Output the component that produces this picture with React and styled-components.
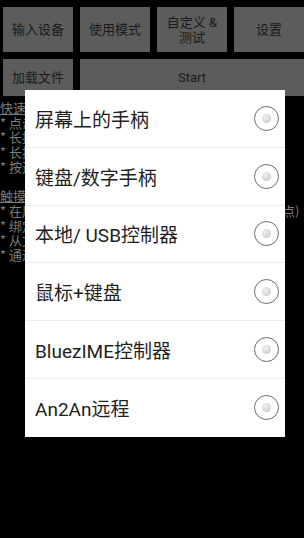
import React from "react"
import styled, { createGlobalStyle } from "styled-components"

const GlobalStyle = createGlobalStyle`
  html, body {
    margin: 0;
    padding: 0;
    background: #000;
  }
  body {
    font-family: Roboto, "Noto Sans CJK SC", sans-serif;
  }
`

const Screen = styled.div`
  position: relative;
  width: 304px;
  height: 538px;
  background: #000;
  overflow: hidden;
`

const Toolbar = styled.div`
  display: grid;
  grid-template-columns: repeat(4, 1fr);
  grid-template-rows: 45px 37px;
  gap: 7px;
  padding: 7px 0 0 3px;
`

const Button = styled.div`
  grid-column: ${p => (p.$span ? `span ${p.$span}` : "auto")};
  display: flex;
  align-items: center;
  justify-content: center;
  text-align: center;
  background: #5c5c5c;
  color: #1a1a1a;
  font-size: 13px;
  line-height: 15px;
`

const Help = styled.div`
  padding: 5px 0 0 0;
  color: #7c7c7c;
  font-family: "Noto Sans CJK SC", sans-serif;
  font-size: 13px;
  line-height: 14.7px;
`

const Line = styled.div`
  white-space: nowrap;
  overflow: hidden;
  height: 14.7px;
  text-decoration: ${p => (p.$head ? "underline" : "none")};
`

const Dialog = styled.div`
  position: absolute;
  left: 25px;
  top: 90px;
  width: 260px;
  background: #fff;
  display: flex;
  flex-direction: column;
`

const Option = styled.div`
  height: 57.8px;
  box-sizing: border-box;
  display: flex;
  align-items: center;
  justify-content: space-between;
  padding: 0 6px 0 10px;
  border-bottom: ${p => (p.$last ? "none" : "1px solid #ececec")};
  color: #1e1e1e;
  font-size: 19px;
`

const Radio = styled.div`
  width: 25px;
  height: 25px;
  box-sizing: border-box;
  border-radius: 50%;
  border: 1.5px solid #6c6c6c;
  display: flex;
  align-items: center;
  justify-content: center;

  &::after {
    content: "";
    width: 9px;
    height: 9px;
    border-radius: 50%;
    background: radial-gradient(circle at 40% 35%, #f2f2f2, #c2c2c2);
  }
`

const helpLines = [
  { text: "快速入门", head: true },
  { text: "* 点击“输入设备”选择控制器" },
  { text: "* 长按按钮可查看帮助" },
  { text: "* 长按屏幕可隐藏界面" },
  { text: "* 按返回键退出" },
  { text: "" },
  { text: "触摸模式", head: true },
  { text: "* 在屏幕上显示虚拟手柄（需要悬浮窗权限和触摸点)" },
  { text: "* 绑定按键到屏幕位置" },
  { text: "* 从文件加载配置" },
  { text: "* 通过蓝牙连接" },
]

const options = [
  "屏幕上的手柄",
  "键盘/数字手柄",
  "本地/ USB控制器",
  "鼠标+键盘",
  "BluezIME控制器",
  "An2An远程",
]

export default function App() {
  return (
    <Screen>
      <GlobalStyle />
      <Toolbar>
        <Button>输入设备</Button>
        <Button>使用模式</Button>
        <Button>
          自定义 &amp;
          <br />
          测试
        </Button>
        <Button>设置</Button>
        <Button>加载文件</Button>
        <Button $span={3}>Start</Button>
      </Toolbar>
      <Help>
        {helpLines.map((l, i) => (
          <Line key={i} $head={l.head}>
            {l.text}
          </Line>
        ))}
      </Help>
      <Dialog>
        {options.map((o, i) => (
          <Option key={o} $last={i === options.length - 1}>
            {o}
            <Radio />
          </Option>
        ))}
      </Dialog>
    </Screen>
  )
}
